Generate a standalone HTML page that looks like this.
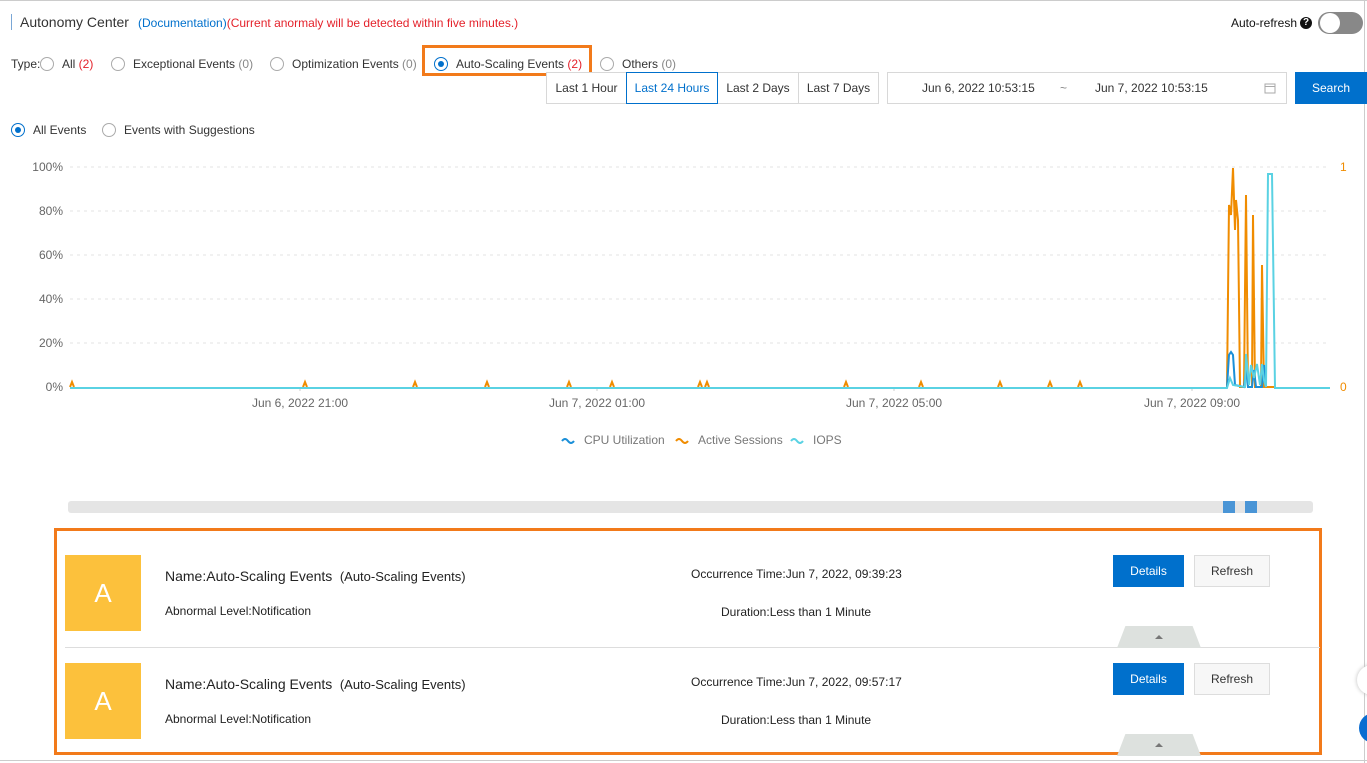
<!DOCTYPE html>
<html><head><meta charset="utf-8"><style>
*{box-sizing:border-box;margin:0;padding:0}
body{width:1367px;height:763px;background:#fff;font-family:"Liberation Sans",Arial,sans-serif;font-size:12px;color:#333;position:relative;overflow:hidden}
.a{position:absolute;white-space:nowrap}
.radio{position:absolute;width:14px;height:14px;border:1px solid #aaa;border-radius:50%;background:#fff}
.radio.on{border-color:#0070cc}
.radio.on::after{content:"";position:absolute;left:3px;top:3px;width:6px;height:6px;border-radius:50%;background:#0070cc}
.red{color:#e4222b}.gray{color:#888}
.tb{position:absolute;top:72px;height:32px;border:1px solid #d8d8d8;line-height:30px;text-align:center;color:#333;background:#fff}
.btnb{position:absolute;width:71px;height:32px;background:#0070cc;color:#fff;text-align:center;line-height:32px}
.btnw{position:absolute;width:76px;height:32px;background:#f7f7f7;border:1px solid #ddd;text-align:center;line-height:30px;color:#333}
.av{position:absolute;left:65px;width:76px;height:76px;background:#fcc13c;color:#fff;font-size:26px;text-align:center;line-height:76px}
.tab{position:absolute;width:84px;height:22px;background:#dde1de;clip-path:polygon(10% 0,90% 0,100% 100%,0 100%)}
.tab::after{content:"";position:absolute;left:38px;top:9px;border:4px solid transparent;border-bottom:4px solid #777;border-top:0}
</style></head><body>
<div class="a" style="left:0;top:0;width:1367px;height:1px;background:#ccc"></div>
<div class="a" style="left:1364px;top:0;width:1px;height:763px;background:#ccc"></div>
<div class="a" style="left:11px;top:14px;width:1px;height:16px;background:#7aa7d6"></div>
<div class="a" style="left:20px;top:14px;font-size:14px;color:#333">Autonomy Center</div>
<div class="a" style="left:138px;top:16px;color:#0070cc">(Documentation)<span class="red">(Current anormaly will be detected within five minutes.)</span></div>
<div class="a" style="left:1231px;top:16px;color:#111">Auto-refresh</div>
<div class="a" style="left:1300px;top:17px;width:12px;height:12px;border-radius:50%;background:#111;color:#fff;font-size:10px;font-weight:bold;text-align:center;line-height:12px">?</div>
<div class="a" style="left:1318px;top:12px;width:45px;height:22px;border-radius:11px;background:#888"></div>
<div class="a" style="left:1320px;top:13px;width:20px;height:20px;border-radius:50%;background:#fff"></div>

<div class="a" style="left:11px;top:57px">Type:</div>
<div class="radio" style="left:40px;top:57px"></div><div class="a" style="left:62px;top:57px">All <span class="red">(2)</span></div>
<div class="radio" style="left:111px;top:57px"></div><div class="a" style="left:133px;top:57px">Exceptional Events <span class="gray">(0)</span></div>
<div class="radio" style="left:270px;top:57px"></div><div class="a" style="left:292px;top:57px">Optimization Events <span class="gray">(0)</span></div>
<div class="a" style="left:422px;top:45px;width:170px;height:31px;border:3px solid #f27a1a"></div>
<div class="radio on" style="left:434px;top:57px"></div><div class="a" style="left:456px;top:57px">Auto-Scaling Events <span class="red">(2)</span></div>
<div class="radio" style="left:600px;top:57px"></div><div class="a" style="left:622px;top:57px">Others <span class="gray">(0)</span></div>

<div class="tb" style="left:546px;width:81px">Last 1 Hour</div>
<div class="tb" style="left:626px;width:92px;border-color:#0070cc;color:#0070cc;z-index:2">Last 24 Hours</div>
<div class="tb" style="left:717px;width:82px">Last 2 Days</div>
<div class="tb" style="left:798px;width:81px">Last 7 Days</div>
<div class="tb" style="left:887px;width:400px;text-align:left"><span style="position:absolute;left:34px">Jun 6, 2022 10:53:15</span><span style="position:absolute;left:172px;color:#888">~</span><span style="position:absolute;left:207px">Jun 7, 2022 10:53:15</span>
<svg style="position:absolute;left:376px;top:9px" width="12" height="12" viewBox="0 0 12 12"><rect x="1" y="2" width="10" height="9" fill="none" stroke="#aaa"/><line x1="1" y1="4.5" x2="11" y2="4.5" stroke="#aaa"/></svg></div>
<div class="a" style="left:1295px;top:72px;width:72px;height:32px;background:#0070cc;color:#fff;text-align:center;line-height:32px">Search</div>

<div class="radio on" style="left:11px;top:123px"></div><div class="a" style="left:33px;top:123px">All Events</div>
<div class="radio" style="left:102px;top:123px"></div><div class="a" style="left:124px;top:123px">Events with Suggestions</div>

<svg class="a" style="left:0;top:150px" width="1367" height="310" font-family="Liberation Sans,Arial,sans-serif" font-size="12">
<g stroke="#e3e3e3" stroke-dasharray="3,4"><line x1="70" y1="17" x2="1330" y2="17"/><line x1="70" y1="61" x2="1330" y2="61"/><line x1="70" y1="105" x2="1330" y2="105"/><line x1="70" y1="149" x2="1330" y2="149"/><line x1="70" y1="193" x2="1330" y2="193"/></g>
<g fill="#666" text-anchor="end"><text x="63" y="21">100%</text><text x="63" y="65">80%</text><text x="63" y="109">60%</text><text x="63" y="153">40%</text><text x="63" y="197">20%</text><text x="63" y="241">0%</text></g>
<g fill="#f08c00"><text x="1340" y="21">1</text><text x="1340" y="241">0</text></g>
<g fill="#666" text-anchor="middle"><text x="300" y="257">Jun 6, 2022 21:00</text><text x="597" y="257">Jun 7, 2022 01:00</text><text x="894" y="257">Jun 7, 2022 05:00</text><text x="1192" y="257">Jun 7, 2022 09:00</text></g>
<g stroke="#ccc"><line x1="300" y1="237" x2="300" y2="241"/><line x1="597" y1="237" x2="597" y2="241"/><line x1="894" y1="237" x2="894" y2="241"/><line x1="1192" y1="237" x2="1192" y2="241"/></g>
<g fill="none" stroke="#f08c00" stroke-width="2">
<path d="M70 237 L72 232 L74 237 M303 237 L305 232 L307 237 M413 237 L415 232 L417 237 M485 237 L487 232 L489 237 M567 237 L569 232 L571 237 M610 237 L612 232 L614 237 M698 237 L700 232 L702 237 M705 237 L707 232 L709 237 M844 237 L846 232 L848 237 M919 237 L921 232 L923 237 M998 237 L1000 232 L1002 237 M1048 237 L1050 232 L1052 237 M1078 237 L1080 232 L1082 237"/>
<path d="M1227 237 L1229 55 L1231 65 L1233 18 L1235 80 L1236 50 L1238 70 L1240 237 L1244 237 L1246 45 L1248 237 L1252 237 L1253 65 L1255 237 L1261 237 L1262 115 L1264 237 L1275 237"/>
</g>
<path d="M1227 237 L1229 205 L1231 202 L1233 205 L1235 235 L1244 237 L1246 220 L1248 237 L1252 237 L1254 220 L1256 237 L1262 237 L1264 215 L1266 237" fill="none" stroke="#1b8fd8" stroke-width="2"/>
<path d="M70 238 L1227 238 L1230 228 L1233 235 L1245 237 L1246 204 L1249 235 L1251 215 L1254 228 L1257 214 L1260 235 L1262 214 L1264 230 L1266 237 L1268 24 L1272 24 L1275 238 L1330 238" fill="none" stroke="#5ad2e3" stroke-width="2"/>
<g font-size="12" fill="#777"><path d="M562 291 q3 -4 6 0 t6 0" stroke="#1b8fd8" stroke-width="2" fill="none"/><text x="584" y="294">CPU Utilization</text>
<path d="M676 291 q3 -4 6 0 t6 0" stroke="#f08c00" stroke-width="2" fill="none"/><text x="698" y="294">Active Sessions</text>
<path d="M791 291 q3 -4 6 0 t6 0" stroke="#5ad2e3" stroke-width="2" fill="none"/><text x="813" y="294">IOPS</text></g>
</svg>

<div class="a" style="left:68px;top:501px;width:1245px;height:12px;border-radius:3px;background:#e5e5e5"></div>
<div class="a" style="left:1223px;top:501px;width:12px;height:12px;background:#4a95d6"></div>
<div class="a" style="left:1245px;top:501px;width:12px;height:12px;background:#4a95d6"></div>

<div class="a" style="left:54px;top:528px;width:1268px;height:227px;border:3px solid #f27a1a"></div>
<div class="a" style="left:65px;top:647px;width:1255px;height:1px;background:#ddd"></div>

<div class="av" style="top:555px">A</div>
<div class="a" style="left:165px;top:568px;font-size:14px;color:#222">Name:Auto-Scaling Events <span style="font-size:13px">&nbsp;(Auto-Scaling Events)</span></div>
<div class="a" style="left:165px;top:604px;color:#222">Abnormal Level:Notification</div>
<div class="a" style="left:691px;top:567px;color:#222">Occurrence Time:Jun 7, 2022, 09:39:23</div>
<div class="a" style="left:721px;top:605px;color:#222">Duration:Less than 1 Minute</div>
<div class="btnb" style="left:1113px;top:555px">Details</div>
<div class="btnw" style="left:1194px;top:555px">Refresh</div>
<div class="tab" style="left:1117px;top:626px"></div>

<div class="av" style="top:663px">A</div>
<div class="a" style="left:165px;top:676px;font-size:14px;color:#222">Name:Auto-Scaling Events <span style="font-size:13px">&nbsp;(Auto-Scaling Events)</span></div>
<div class="a" style="left:165px;top:712px;color:#222">Abnormal Level:Notification</div>
<div class="a" style="left:691px;top:675px;color:#222">Occurrence Time:Jun 7, 2022, 09:57:17</div>
<div class="a" style="left:721px;top:713px;color:#222">Duration:Less than 1 Minute</div>
<div class="btnb" style="left:1113px;top:663px">Details</div>
<div class="btnw" style="left:1194px;top:663px">Refresh</div>
<div class="tab" style="left:1117px;top:734px"></div>

<div class="a" style="left:1357px;top:665px;width:30px;height:30px;border-radius:50%;background:#fff;box-shadow:0 0 4px #bbb"></div>
<div class="a" style="left:1359px;top:713px;width:30px;height:30px;border-radius:50%;background:#0a6dd1"></div>
<div class="a" style="left:0;top:760px;width:1367px;height:1px;background:#ccc"></div>
</body></html>
